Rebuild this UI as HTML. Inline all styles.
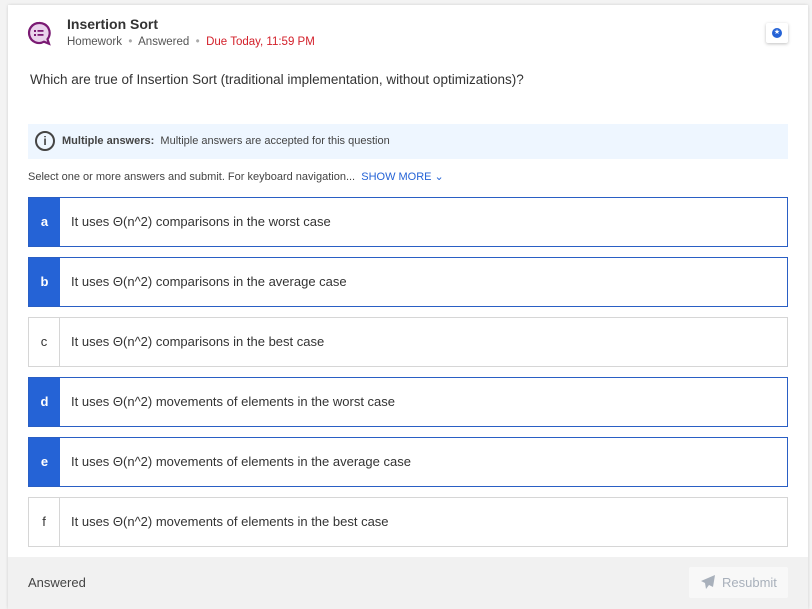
<!DOCTYPE html>
<html><head><style>
*{box-sizing:border-box;margin:0;padding:0}
body{width:812px;height:609px;background:#f3f3f3;font-family:"Liberation Sans",sans-serif;position:relative;overflow:hidden;color:#333}
.card{position:absolute;left:8px;top:5px;width:800px;height:604px;background:#fff;box-shadow:0 0 3px rgba(0,0,0,.15)}
.abs{position:absolute}
.opt{position:absolute;left:28px;width:760px;height:50px;border:1px solid #d6d6d6;background:#fff}
.opt.sel{border-color:#2a5fc4}
.opt .l{position:absolute;left:0;top:0;width:31px;height:100%;border-right:1px solid #d6d6d6;font-size:13px;text-align:center;line-height:48px;color:#333}
.opt.sel .l{background:#2563d6;color:#fff;border-right:none;font-weight:bold}
.opt .t{position:absolute;left:42px;top:0;line-height:48px;font-size:13px;color:#333}
</style></head><body>
<div class="card"></div>
<svg class="abs" style="left:27px;top:21px" width="26" height="26" viewBox="0 0 26 26"><path d="M12 2a10 10 0 1 0 5 18.7l5 2-1.5-4.5A10 10 0 0 0 12 2z" fill="#e9d3ec" stroke="#7a1a73" stroke-width="2.2"/><rect x="7" y="9" width="2" height="2" fill="#7a1a73"/><rect x="7" y="13" width="2" height="2" fill="#7a1a73"/><rect x="10.5" y="9" width="6" height="1.8" fill="#7a1a73"/><rect x="10.5" y="13" width="6" height="1.8" fill="#7a1a73"/></svg>
<div class="abs" style="left:67px;top:16px;font-size:14px;font-weight:bold;color:#333">Insertion Sort</div>
<div class="abs" style="left:67px;top:36px;font-size:11.5px;color:#555">Homework <span style="color:#aaa">&nbsp;•&nbsp;</span> Answered <span style="color:#aaa">&nbsp;•&nbsp;</span> <span style="color:#d3202a">Due Today, 11:59 PM</span></div>
<div class="abs" style="left:766px;top:23px;width:22px;height:20px;background:#fff;box-shadow:0 1px 3px rgba(0,0,0,.25);border-radius:2px"><div style="position:absolute;left:6px;top:5px;width:10px;height:10px;border-radius:50%;background:#2563d6;color:#fff;font-size:7px;text-align:center;line-height:10px">★</div></div>
<div class="abs" style="left:30px;top:72px;font-size:13.5px;color:#333">Which are true of Insertion Sort (traditional implementation, without optimizations)?</div>
<div class="abs" style="left:28px;top:124px;width:760px;height:35px;background:#eef6ff"></div>
<div class="abs" style="left:35px;top:131px;width:20px;height:20px;border:2px solid #444;border-radius:50%;font-size:12px;font-weight:bold;text-align:center;line-height:16px;color:#444">i</div>
<div class="abs" style="left:62px;top:135px;font-size:11px;color:#444"><b>Multiple answers:</b>&nbsp; Multiple answers are accepted for this question</div>
<div class="abs" style="left:28px;top:170px;font-size:11px;color:#444">Select one or more answers and submit. For keyboard navigation... <span style="color:#2563d6">&nbsp;SHOW MORE ⌄</span></div>
<div class="opt sel" style="top:197px"><div class="l">a</div><div class="t">It uses Θ(n^2) comparisons in the worst case</div></div>
<div class="opt sel" style="top:257px"><div class="l">b</div><div class="t">It uses Θ(n^2) comparisons in the average case</div></div>
<div class="opt" style="top:317px"><div class="l">c</div><div class="t">It uses Θ(n^2) comparisons in the best case</div></div>
<div class="opt sel" style="top:377px"><div class="l">d</div><div class="t">It uses Θ(n^2) movements of elements in the worst case</div></div>
<div class="opt sel" style="top:437px"><div class="l">e</div><div class="t">It uses Θ(n^2) movements of elements in the average case</div></div>
<div class="opt" style="top:497px"><div class="l">f</div><div class="t">It uses Θ(n^2) movements of elements in the best case</div></div>
<div class="abs" style="left:8px;top:557px;width:800px;height:52px;background:#f1f1f1"></div>
<div class="abs" style="left:28px;top:575px;font-size:13px;color:#444">Answered</div>
<div class="abs" style="left:689px;top:567px;width:99px;height:31px;background:#f8f8f8;border-radius:2px;font-size:13px;color:#a8b0bb;line-height:31px;padding-left:33px">Resubmit</div>
<svg class="abs" style="left:700px;top:574px" width="16" height="16" viewBox="0 0 16 16"><path d="M15 1L1 7l4 2 1 6 3-4 4 2z" fill="#a8b0bb"/></svg>
</body></html>
